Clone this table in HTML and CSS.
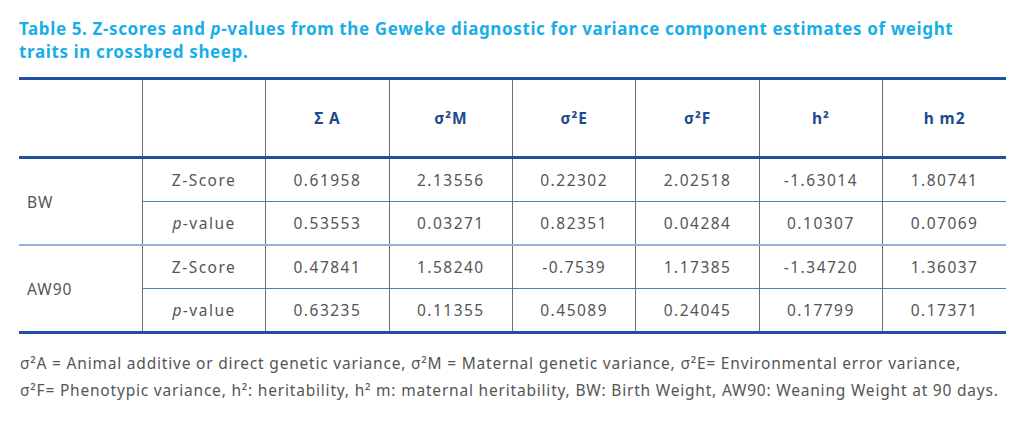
FILE: index.html
```html
<!DOCTYPE html>
<html lang="en">
<head>
<meta charset="utf-8">
<title>Table 5</title>
<link rel="stylesheet" href="styles.css">
</head>
<body>
<div class="page">
  <h1 class="title">Table 5. Z-scores and <i>p</i>-values from the Geweke diagnostic for variance component estimates of weight<br>traits in crossbred sheep.</h1>
  <table class="data">
    <thead>
      <tr>
        <th></th><th></th><th>Σ A</th><th>σ²M</th><th>σ²E</th><th>σ²F</th><th>h²</th><th>h m2</th>
      </tr>
    </thead>
    <tbody>
      <tr>
        <td class="group" rowspan="2">BW</td>
        <td>Z-Score</td><td>0.61958</td><td>2.13556</td><td>0.22302</td><td>2.02518</td><td>-1.63014</td><td>1.80741</td>
      </tr>
      <tr class="last">
        <td><i>p</i>-value</td><td>0.53553</td><td>0.03271</td><td>0.82351</td><td>0.04284</td><td>0.10307</td><td>0.07069</td>
      </tr>
      <tr>
        <td class="group" rowspan="2">AW90</td>
        <td>Z-Score</td><td>0.47841</td><td>1.58240</td><td>-0.7539</td><td>1.17385</td><td>-1.34720</td><td>1.36037</td>
      </tr>
      <tr>
        <td><i>p</i>-value</td><td>0.63235</td><td>0.11355</td><td>0.45089</td><td>0.24045</td><td>0.17799</td><td>0.17371</td>
      </tr>
    </tbody>
  </table>
  <p class="note">σ²A = Animal additive or direct genetic variance, σ²M = Maternal genetic variance, σ²E= Environmental error variance,<br>σ²F= Phenotypic variance, h²: heritability, h² m: maternal heritability, BW: Birth Weight, AW90: Weaning Weight at 90 days.</p>
</div>
</body>
</html>
```

FILE: styles.css
```css
html, body {
  margin: 0;
  padding: 0;
  background: #ffffff;
}

.page {
  padding: 17px 0 0 19px;
  font-family: "Noto Sans", "Open Sans", sans-serif;
}

.title {
  margin: 0;
  font-size: 17px;
  line-height: 23px;
  font-weight: 700;
  color: #1aaee8;
  letter-spacing: 0.62px;
}

.data {
  margin-top: 14px;
  width: 987px;
  table-layout: fixed;
  border-collapse: collapse;
  border-top: 3px solid #1f53a0;
  border-bottom: 3px solid #1f53a0;
}

.data th,
.data td {
  padding: 0;
  text-align: center;
  border-left: 1px solid #6e6e6e;
}

.data th:first-child,
.data td.group {
  border-left: none;
}

.data thead th {
  height: 76px;
  font-size: 15.5px;
  font-weight: 700;
  color: #1d4b8f;
  letter-spacing: 0.9px;
  border-bottom: 3px solid #1f53a0;
}

.data tbody td {
  height: 42px;
  font-size: 15.5px;
  letter-spacing: 1.5px;
  color: #555555;
  border-bottom: 1px solid #4e7fbf;
}

.data tbody td.group {
  text-align: left;
  padding-left: 8px;
  letter-spacing: 1px;
  border-bottom: 2px solid #93b2da;
}

.data tbody tr.last td {
  border-bottom: 2px solid #93b2da;
}

.data tbody tr:last-child td {
  border-bottom: none;
}

.note {
  margin: 16px 0 0 1px;
  font-size: 15.5px;
  line-height: 27px;
  letter-spacing: 0.8px;
  color: #555555;
}
```
